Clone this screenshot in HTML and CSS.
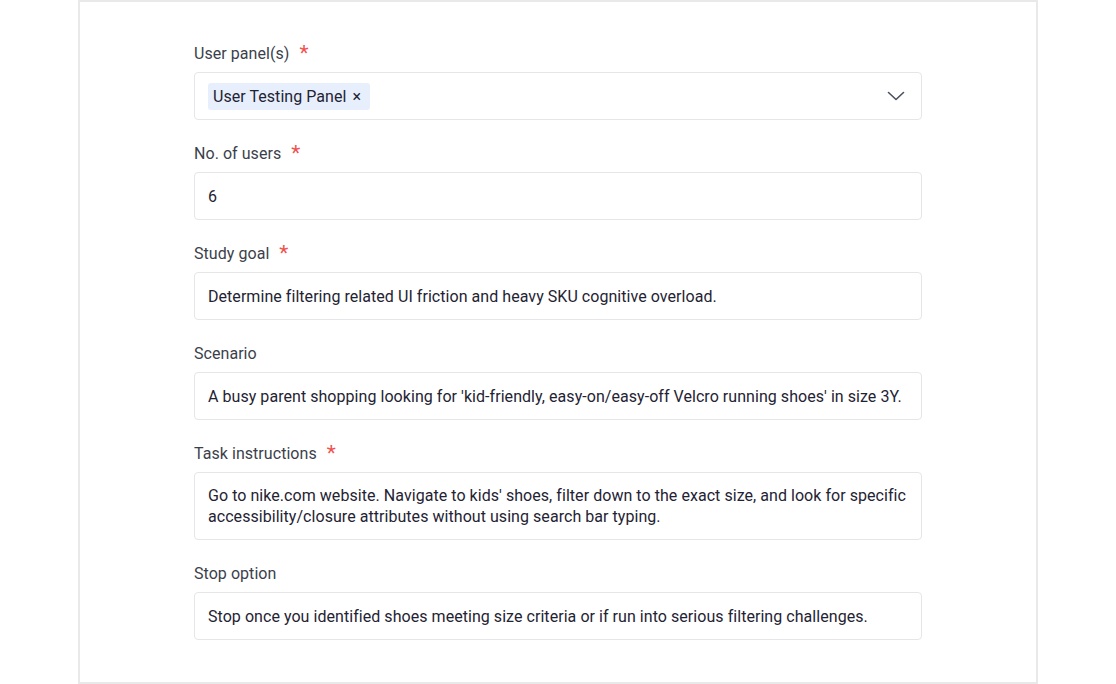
FILE: index.html
```html
<!DOCTYPE html>
<html lang="en">
<head>
  <meta charset="UTF-8" />
  <title>Study setup</title>
  <link rel="stylesheet" href="styles.css">
</head>
<body>
  <main class="card">
    <div class="field">
      <label class="field-label">User panel(s) <span class="req">*</span></label>
      <div class="select">
        <span class="chip">User Testing Panel <span class="chip-x">×</span></span>
        <svg class="chevron" width="18" height="10" viewBox="0 0 18 10" fill="none">
          <path d="M1.5 1.5 L9 8.5 L16.5 1.5" stroke="#4b5060" stroke-width="1.6" stroke-linecap="round" stroke-linejoin="round"/>
        </svg>
      </div>
    </div>

    <div class="field">
      <label class="field-label">No. of users <span class="req">*</span></label>
      <div class="input">6</div>
    </div>

    <div class="field">
      <label class="field-label">Study goal <span class="req">*</span></label>
      <div class="input">Determine filtering related UI friction and heavy SKU cognitive overload.</div>
    </div>

    <div class="field">
      <label class="field-label">Scenario</label>
      <div class="input">A busy parent shopping looking for 'kid-friendly, easy-on/easy-off Velcro running shoes' in size 3Y.</div>
    </div>

    <div class="field">
      <label class="field-label">Task instructions <span class="req">*</span></label>
      <div class="input">Go to nike.com website. Navigate to kids' shoes, filter down to the exact size, and look for specific accessibility/closure attributes without using search bar typing.</div>
    </div>

    <div class="field">
      <label class="field-label">Stop option</label>
      <div class="input">Stop once you identified shoes meeting size criteria or if run into serious filtering challenges.</div>
    </div>
  </main>
</body>
</html>
```

FILE: styles.css
```css
:root {
  --color-border: #e6e6e8;
  --color-card-border: #e9e9e9;
  --color-label: #3b3f4c;
  --color-text: #1f2333;
  --color-required: #f0524f;
  --color-chip: #e8effc;
}

body {
  margin: 0;
  background: white;
  font-family: Roboto, "Liberation Sans", sans-serif;
  font-size: 16px;
  letter-spacing: 0.05px;
  color: var(--color-text);
}

.card {
  width: 960px;
  box-sizing: border-box;
  margin: 0 auto;
  border: 2px solid var(--color-card-border);
  padding: 40px 114px 20px;
}

.field {
  margin-bottom: 22px;
}

.field-label {
  display: block;
  height: 22px;
  line-height: 22px;
  padding-top: 1px;
  margin-bottom: 7px;
  color: var(--color-label);
}

.req {
  color: var(--color-required);
  font-size: 21px;
  line-height: 0;
  margin-left: 6px;
  vertical-align: -1px;
}

.input,
.select {
  border: 1px solid var(--color-border);
  border-radius: 4px;
  padding: 12px 13px;
  line-height: 21px;
}

.input {
  display: flex;
  align-items: center;
  min-height: 22px;
}

.select {
  display: flex;
  align-items: center;
  justify-content: space-between;
  padding: 9px 16px 9px 13px;
  box-sizing: border-box;
  height: 48px;
}

.chip {
  background: var(--color-chip);
  border-radius: 3px;
  padding: 3px 9px 3px 5px;
  line-height: 21px;
  color: var(--color-text);
}

.chip-x {
  margin-left: 2px;
}

.chevron {
  display: block;
}
```
